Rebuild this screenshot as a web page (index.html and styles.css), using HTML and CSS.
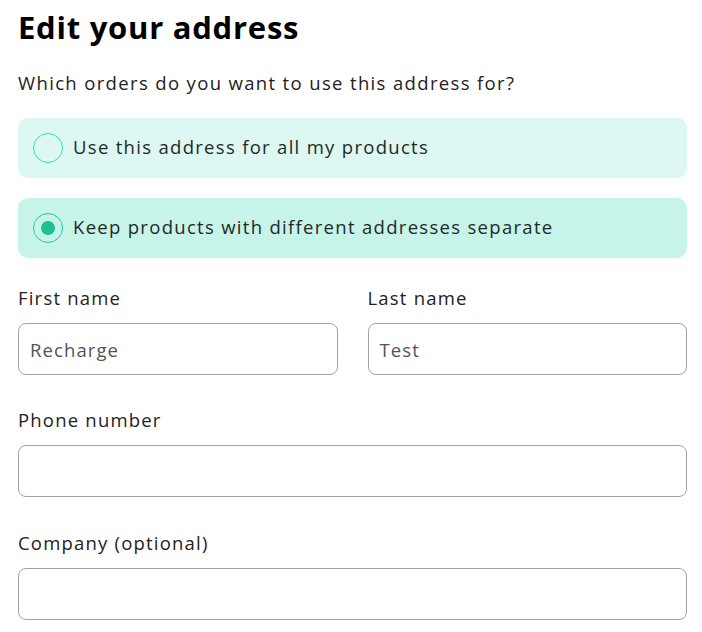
FILE: index.html
```html
<!DOCTYPE html>
<html>
<head>
<meta charset="utf-8">
<link rel="stylesheet" href="styles.css">
</head>
<body>
<div class="page">
  <h1 class="title">Edit your address</h1>
  <p class="question">Which orders do you want to use this address for?</p>
  <div class="options">
    <label class="option option-light">
      <span class="radio"></span>
      <span class="option-text">Use this address for all my products</span>
    </label>
    <label class="option option-selected">
      <span class="radio radio-on"><span class="dot"></span></span>
      <span class="option-text">Keep products with different addresses separate</span>
    </label>
  </div>
  <div class="row">
    <div class="field">
      <div class="label">First name</div>
      <div class="input">Recharge</div>
    </div>
    <div class="field">
      <div class="label">Last name</div>
      <div class="input">Test</div>
    </div>
  </div>
  <div class="field block">
    <div class="label">Phone number</div>
    <div class="input"></div>
  </div>
  <div class="field block">
    <div class="label">Company (optional)</div>
    <div class="input"></div>
  </div>
</div>
</body>
</html>
```

FILE: styles.css
```css
html, body {
  margin: 0;
  padding: 0;
  background: #ffffff;
}
body {
  font-family: "Open Sans", "DejaVu Sans", sans-serif;
  color: #1f2624;
}
.page {
  width: 669px;
  padding: 8px 0 0 18px;
}
.title {
  margin: 0;
  font-size: 31px;
  line-height: 38px;
  font-weight: 700;
  color: #000;
  letter-spacing: 0.75px;
}
.question {
  margin: 25px 0 0 0;
  font-size: 18.5px;
  line-height: 24px;
  letter-spacing: 1.35px;
  color: #222;
}
.options {
  margin-top: 23px;
  display: flex;
  flex-direction: column;
  gap: 20px;
}
.option {
  height: 60px;
  border-radius: 10px;
  display: flex;
  align-items: center;
  padding-left: 15px;
  gap: 10px;
}
.option-light { background: #ddf8f2; }
.option-selected { background: #c6f4e9; }
.radio {
  width: 28px;
  height: 28px;
  border: 1px solid #34dcb6;
  border-radius: 50%;
  display: flex;
  align-items: center;
  justify-content: center;
  flex: none;
}
.radio-on { border-color: #2cc4a0; }
.dot {
  width: 14px;
  height: 14px;
  border-radius: 50%;
  background: #1fbe95;
}
.option-text {
  font-size: 18.5px;
  line-height: 22px;
  padding-bottom: 2px;
  letter-spacing: 1.3px;
  color: #1f2a27;
}
.row {
  display: grid;
  grid-template-columns: 1fr 1fr;
  column-gap: 30px;
  margin-top: 28px;
}
.block {
  margin-top: 33px;
}
.block + .block {
  margin-top: 34px;
}
.label {
  font-size: 18.5px;
  line-height: 24px;
  letter-spacing: 1.2px;
  color: #222;
}
.input {
  margin-top: 13px;
  height: 50px;
  border: 1px solid #a3a3a3;
  border-radius: 8px;
  box-sizing: content-box;
  padding: 0 11px;
  display: flex;
  align-items: center;
  font-size: 18.5px;
  letter-spacing: 1.1px;
  color: #4e5654;
}
```
